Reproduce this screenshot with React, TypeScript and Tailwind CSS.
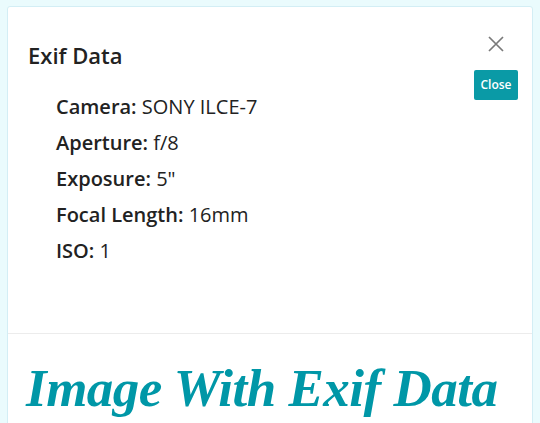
import React from "react";

const rows = [
  { label: "Camera:", value: "SONY ILCE-7" },
  { label: "Aperture:", value: "f/8" },
  { label: "Exposure:", value: '5"' },
  { label: "Focal Length:", value: "16mm" },
  { label: "ISO:", value: "1" },
];

const App = () => {
  return (
    <div className="h-[423px] bg-[#eafbfd] pt-[6px] px-[7px] overflow-hidden font-['Open_Sans',sans-serif] text-[#222]">
      <div className="bg-white border border-[#d3eef5] rounded-t-[3px] h-[440px]">
        {/* exif panel */}
        <div className="h-[326px] flex justify-between pl-[20px] pr-[14px] pt-[27px]">
          <div className="pt-[8px]">
            <h2 className="text-[22px] leading-[26px] font-semibold text-[#222]">Exif Data</h2>
            <ul className="mt-[21px] pl-[28px]">
              {rows.map((r) => (
                <li key={r.label} className="text-[20px] leading-[36px]">
                  <span className="font-semibold">{r.label}</span> {r.value}
                </li>
              ))}
            </ul>
          </div>
          <div className="flex flex-col items-center w-[44px]">
            <button className="w-[20px] h-[20px] flex items-center justify-center text-[#7a7a7a]">
              <svg width="16" height="16" viewBox="0 0 16 16" fill="none" stroke="currentColor" strokeWidth="1.7">
                <path d="M1 1 L15 15 M15 1 L1 15" />
              </svg>
            </button>
            <button className="mt-[16px] w-[44px] h-[30px] rounded-[2px] bg-[#0a9aa6] text-white text-[12px] font-semibold">
              Close
            </button>
          </div>
        </div>
        <div className="border-t border-[#ececec] pt-[24px] pl-[18px]">
          <h1 className="font-['Liberation_Serif',serif] italic font-bold text-[53px] leading-[60px] text-[#0097a7] tracking-[-0.5px]">
            Image With Exif Data
          </h1>
        </div>
      </div>
    </div>
  );
};

export default App;
